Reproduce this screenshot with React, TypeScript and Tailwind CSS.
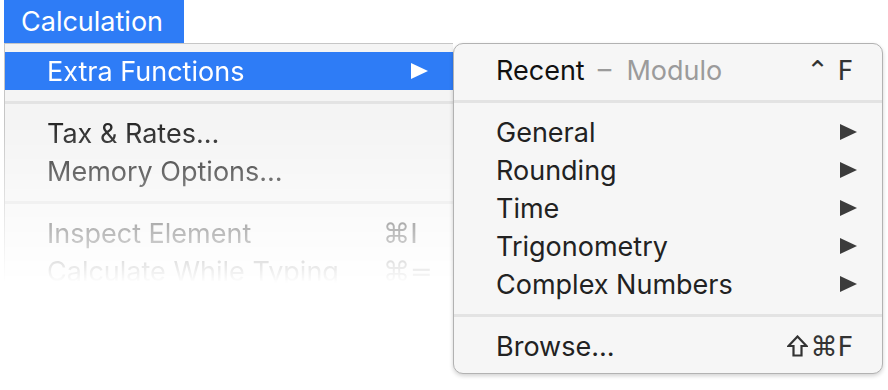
import React from 'react';

const sym = "font-['DejaVu_Sans',sans-serif]";

// Submenu arrow drawn as a solid triangle
const Arrow: React.FC<{ className?: string }> = ({ className }) => (
  <svg viewBox="0 0 17 16" className={`w-[17px] h-[16px] ${className}`}>
    <polygon points="0,0 17,8 0,16" fill="currentColor" />
  </svg>
);

// Outlined shift key symbol
const Shift: React.FC = () => (
  <svg viewBox="0 0 21 22" className="w-[21px] h-[22px] mr-[2px]">
    <polygon points="10.5,1.5 19.5,11 14.5,11 14.5,20.5 6.5,20.5 6.5,11 1.5,11" fill="none" stroke="#333" strokeWidth="2.2" />
  </svg>
);

const Separator: React.FC = () => (
  <div className="h-[24px] pt-[11px]">
    <div className="h-[3px] bg-[#e3e3e3]" />
  </div>
);

const Row: React.FC<{ children: React.ReactNode; className?: string }> = ({ children, className }) => (
  <div className={`h-[38px] flex items-center pl-[42px] leading-none ${className ?? ''}`}>{children}</div>
);

const LeftMenu: React.FC = () => (
  <div className="ml-[4px] w-[449px] h-[255px] bg-[#f4f4f4] border-l border-t border-[#c6c6c6] pt-[8px] text-[#262626] [mask-image:linear-gradient(to_bottom,black_80px,transparent_240px)] [-webkit-mask-image:linear-gradient(to_bottom,black_80px,transparent_240px)]">
    <Row className="bg-[#2e7cf6] text-white pr-[25px]">
      <span className="flex-1">Extra Functions</span>
      <Arrow className="text-white" />
    </Row>
    <Separator />
    <Row>Tax &amp; Rates…</Row>
    <Row>Memory Options…</Row>
    <Separator />
    <Row className="pr-[25px]">
      <span className="flex-1">Inspect Element</span>
      <span className={`w-[45px] ${sym}`}>⌘I</span>
    </Row>
    <Row className="pr-[25px]">
      <span className="flex-1">Calculate While Typing</span>
      <span className={`w-[45px] ${sym}`}>⌘=</span>
    </Row>
  </div>
);

const SubMenu: React.FC = () => {
  const items = ['General', 'Rounding', 'Time', 'Trigonometry', 'Complex Numbers'];
  return (
    <div className="absolute left-[453px] top-[43px] w-[430px] h-[331px] bg-[#f6f6f6] border border-[#b2b2b2] rounded-[10px] shadow-[0_2px_4px_rgba(0,0,0,0.18)] pt-[7px] text-[#222]">
      <Row className="pr-[29px]">
        <span className="text-[#111]">Recent</span>
        <span className="flex-1 text-[#9b9b9b] pl-[13px]">–&nbsp; Modulo</span>
        <span className={`${sym} text-[#333]`}>⌃ F</span>
      </Row>
      <Separator />
      {items.map((label) => (
        <Row key={label} className="pr-[25px]">
          <span className="flex-1">{label}</span>
          <Arrow className="text-[#3c3c3c]" />
        </Row>
      ))}
      <Separator />
      <Row className="pr-[29px]">
        <span className="flex-1">Browse…</span>
        <Shift />
        <span className={`${sym} text-[#333]`}>⌘F</span>
      </Row>
    </div>
  );
}

export default function App() {
  return (
    <div className="relative w-[888px] h-[390px] bg-white overflow-hidden font-['Inter',sans-serif] text-[27px]">
      <div className="ml-[4px] w-[180px] h-[43px] bg-[#2e7cf6] text-white flex items-center pl-[17px] leading-none">
        Calculation
      </div>
      <LeftMenu />
      <SubMenu />
    </div>
  );
}
